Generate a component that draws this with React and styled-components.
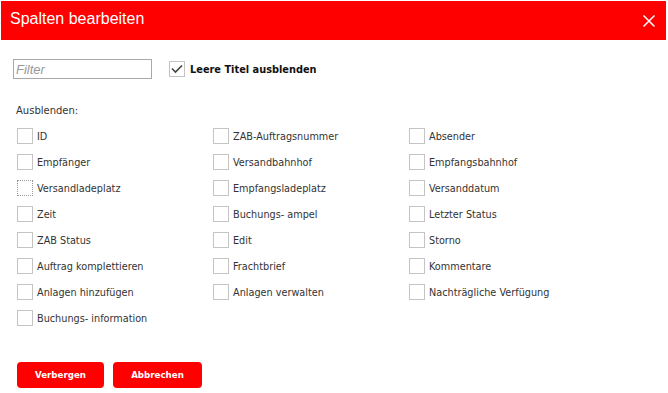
import styled, { createGlobalStyle } from "styled-components";

const GlobalStyle = createGlobalStyle`
  body {
    margin: 0;
    background: #fff;
    font-family: "DejaVu Sans", Verdana, sans-serif;
  }
`;

const Modal = styled.div`
  width: 665px;
  margin: 1px 2px 0 1px;
  background: #fff;
`;

const Header = styled.div`
  height: 39px;
  background: #ff0000;
  display: flex;
  align-items: center;
  justify-content: space-between;
  padding: 0 10px 3px 9px;
  box-sizing: border-box;
`;

const Title = styled.h1`
  margin: 0;
  font-family: "Liberation Sans", Arial, sans-serif;
  font-weight: normal;
  font-size: 16px;
  color: #fff;
`;

const CloseBtn = styled.button`
  border: none;
  background: none;
  padding: 0;
  width: 14px;
  height: 14px;
  display: flex;
  cursor: pointer;
  margin-top: 3px;
`;

const Body = styled.div`
  padding: 16px 16px 0 12px;
`;

const Toolbar = styled.div`
  display: flex;
  align-items: center;
  gap: 17px;
`;

const FilterInput = styled.input`
  width: 139px;
  height: 20px;
  box-sizing: border-box;
  border: 1px solid #a9a9a9;
  padding: 0 2px;
  font-family: "Liberation Sans", Arial, sans-serif;
  font-size: 13px;
  outline: none;
  &::placeholder {
    color: #999;
    font-style: italic;
  }
`;

const CheckRow = styled.label`
  display: flex;
  align-items: center;
  gap: ${(p) => p.$gap || 4}px;
  font-size: ${(p) => (p.$bold ? 9.8 : 9.7)}px;
  font-weight: ${(p) => (p.$bold ? "bold" : "normal")};
  color: ${(p) => (p.$bold ? "#111" : "#333")};
  white-space: nowrap;
  height: 26px;
`;

const Box = styled.span`
  width: 16px;
  height: 16px;
  box-sizing: border-box;
  border: 1px ${(p) => (p.$dotted ? "dotted #999" : "solid #c4c4c4")};
  background: #fff;
  display: flex;
  align-items: center;
  justify-content: center;
  flex-shrink: 0;
`;

const SectionLabel = styled.div`
  margin: 22px 0 0 3px;
  font-size: 10px;
  color: #333;
  line-height: 14px;
`;

const Grid = styled.div`
  display: grid;
  grid-template-columns: repeat(3, 196px);
  grid-auto-rows: 26px;
  margin: 5px 0 0 4px;
`;

const Actions = styled.div`
  display: flex;
  gap: 9px;
  margin: 31px 0 0 4px;
`;

const Button = styled.button`
  height: 26px;
  width: ${(p) => p.$w}px;
  border: none;
  border-radius: 4px;
  background: #ff0000;
  color: #fff;
  font-family: "DejaVu Sans", Verdana, sans-serif;
  font-weight: bold;
  font-size: 8.7px;
  cursor: pointer;
`;

const Checkbox = ({ checked, dotted }) => (
  <Box $dotted={dotted}>
    {checked && (
      <svg width="14" height="14" viewBox="0 0 14 14">
        <path d="M2 6.5 L5.5 10 L12 3.5" fill="none" stroke="#444" strokeWidth="1.6" />
      </svg>
    )}
  </Box>
);

const columns = [
  "ID",
  "ZAB-Auftragsnummer",
  "Absender",
  "Empfänger",
  "Versandbahnhof",
  "Empfangsbahnhof",
  "Versandladeplatz",
  "Empfangsladeplatz",
  "Versanddatum",
  "Zeit",
  "Buchungs- ampel",
  "Letzter Status",
  "ZAB Status",
  "Edit",
  "Storno",
  "Auftrag komplettieren",
  "Frachtbrief",
  "Kommentare",
  "Anlagen hinzufügen",
  "Anlagen verwalten",
  "Nachträgliche Verfügung",
  "Buchungs- information",
];

const App = () => {
  return (
    <>
      <GlobalStyle />
      <Modal>
        <Header>
          <Title>Spalten bearbeiten</Title>
          <CloseBtn aria-label="Schließen">
            <svg width="14" height="14" viewBox="0 0 14 14">
              <path d="M1.5 1.5 L12.5 12.5 M12.5 1.5 L1.5 12.5" stroke="#fff" strokeWidth="1.5" />
            </svg>
          </CloseBtn>
        </Header>
        <Body>
          <Toolbar>
            <FilterInput placeholder="Filter" />
            <CheckRow $bold $gap={5}>
              <Checkbox checked />
              Leere Titel ausblenden
            </CheckRow>
          </Toolbar>
          <SectionLabel>Ausblenden:</SectionLabel>
          <Grid>
            {columns.map((c) => (
              <CheckRow key={c}>
                <Checkbox dotted={c === "Versandladeplatz"} />
                {c}
              </CheckRow>
            ))}
          </Grid>
          <Actions>
            <Button $w={87}>Verbergen</Button>
            <Button $w={89}>Abbrechen</Button>
          </Actions>
        </Body>
      </Modal>
    </>
  );
};

export default App;
